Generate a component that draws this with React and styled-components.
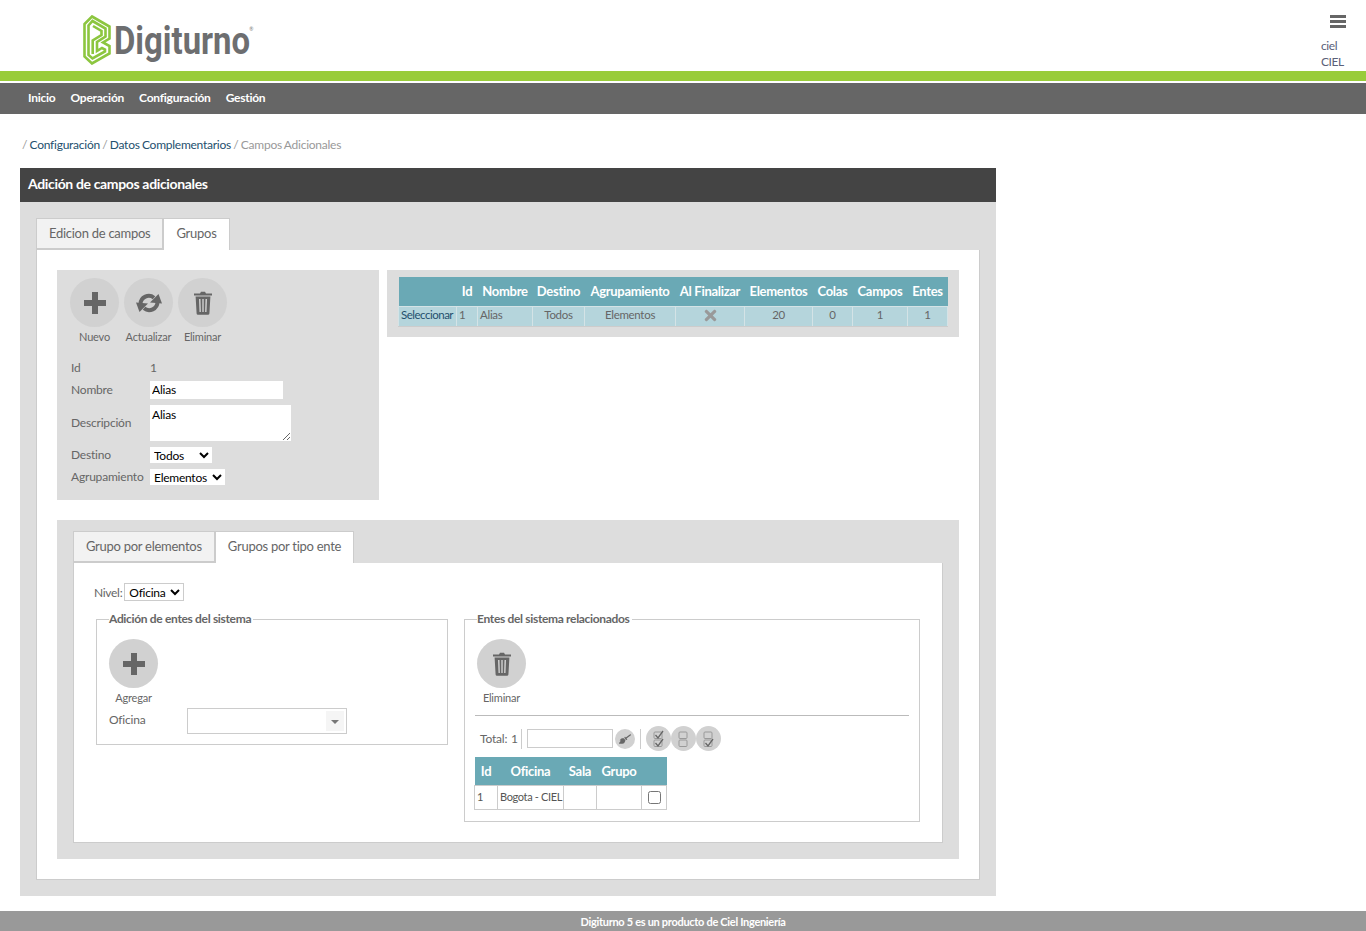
import React from 'react';
import styled, { createGlobalStyle } from 'styled-components';
import { FaTimes, FaBroom } from 'react-icons/fa';

const GlobalStyle = createGlobalStyle`
  html, body {
    margin: 0;
    padding: 0;
    background: #fff;
    font-family: Lato, "Open Sans", sans-serif;
    font-size: 12px;
    color: #666;
  }
  * { box-sizing: border-box; }
`;

const Header = styled.header`
  height: 71px;
  display: flex;
  justify-content: space-between;
  padding-left: 83px;
  padding-right: 19px;
`;

const Logo = styled.div`
  display: flex;
  align-items: flex-start;
  padding-top: 15px;
`;

const LogoText = styled.span`
  display: inline-block;
  font-family: Roboto, sans-serif;
  font-weight: 700;
  font-size: 38px;
  line-height: 52px;
  color: #6d6e70;
  margin: 0 -24px 0 3px;
  transform: scaleX(0.865);
  transform-origin: left center;
`;

const LogoMark = styled.sup`
  font-size: 5px;
  line-height: 1;
  color: #777;
  margin-top: 12px;
  margin-left: 2px;
`;

const UserBox = styled.div`
  width: 26px;
  padding-top: 15px;
  display: flex;
  flex-direction: column;
  color: #5a6078;
  font-size: 12px;
  line-height: 16px;
  letter-spacing: -0.4px;
`;

const Burger = styled.div`
  width: 16px;
  height: 13px;
  margin-left: 9px;
  margin-bottom: 10px;
  background: linear-gradient(#666 0 3px, transparent 3px 5px, #666 5px 8px, transparent 8px 10px, #666 10px 13px);
`;

const GreenBar = styled.div`
  height: 10px;
  background: #99cc3a;
`;

const Nav = styled.nav`
  margin-top: 2px;
  height: 31px;
  background: #666;
  display: flex;
  align-items: center;
  gap: 15px;
  padding: 0 0 2px 28px;
  color: #fff;
  font-size: 12px;
  font-weight: 700;
  letter-spacing: -0.25px;
`;

const Main = styled.main`
  padding: 0 0 15px 20px;
`;

const Breadcrumb = styled.div`
  height: 54px;
  padding: 23px 0 0 2px;
  font-size: 12px;
  line-height: 16px;
  color: #999;
  letter-spacing: -0.25px;
  word-spacing: -0.5px;
  b { font-weight: 400; color: #24506e; }
`;

const Panel = styled.section`
  width: 976px;
`;

const PanelTitle = styled.h1`
  margin: 0;
  height: 34px;
  line-height: 32px;
  padding-left: 8px;
  background: #444;
  color: #fff;
  font-size: 14px;
  font-weight: 700;
  letter-spacing: -0.35px;
`;

const PanelBody = styled.div`
  background: #ddd;
  padding: 16px;
`;

const Tabs = styled.div`
  display: flex;
  height: 32px;
`;

const Tab = styled.div`
  height: 32px;
  padding: 0 12px;
  line-height: 29px;
  font-size: 13px;
  letter-spacing: -0.27px;
  color: #666;
  background: ${p => (p.$active ? '#fff' : '#f2f2f2')};
  border: 1px solid #ccc;
  border-bottom: ${p => (p.$active ? 'none' : '2px solid #ccc')};
`;

const TabContent = styled.div`
  background: #fff;
  border: 1px solid #ccc;
  border-top: none;
  padding: 20px;
  display: flex;
  flex-direction: column;
  gap: 20px;
`;

const TopRow = styled.div`
  display: flex;
  align-items: flex-start;
  gap: 8px;
`;

const FormBox = styled.div`
  width: 322px;
  height: 230px;
  background: #ddd;
  padding: 8px 14px 0 13px;
`;

const Toolbar = styled.div`
  display: flex;
  gap: 5px;
`;

const ActionWrap = styled.div`
  width: 49px;
  display: flex;
  flex-direction: column;
  align-items: center;
`;

const Circle = styled.div`
  width: ${p => p.$size || 49}px;
  height: ${p => p.$size || 49}px;
  flex: none;
  border-radius: 50%;
  background: ${p => p.$bg || '#d1d1d1'};
  color: #666;
  display: flex;
  align-items: center;
  justify-content: center;
`;

const ActionLabel = styled.span`
  margin-top: 3px;
  font-size: 11px;
  line-height: 14px;
  white-space: nowrap;
  color: #666;
  letter-spacing: -0.2px;
`;

const FormGrid = styled.div`
  display: grid;
  grid-template-columns: 79px 1fr;
  margin: 16px 0 0 1px;
  font-size: 12px;
  letter-spacing: -0.2px;
  align-items: center;
  row-gap: 6px;
`;

const FieldLabel = styled.div`
  line-height: 15px;
  margin-top: ${p => (p.$plain ? 0 : -2)}px;
`;

const FieldValue = styled.span`
  line-height: 15px;
`;

const TextField = styled.input`
  display: block;
  width: 133px;
  height: 18px;
  border: none;
  padding: 0 2px 2px;
  font: inherit;
  letter-spacing: -0.2px;
  color: #000;
  background: #fff;
`;

const TextArea = styled.textarea`
  display: block;
  width: 141px;
  height: 36px;
  border: none;
  padding: 2px 2px 0;
  font: inherit;
  letter-spacing: -0.2px;
  line-height: 15px;
  color: #000;
  background: #fff;
`;

const Select = styled.select`
  display: block;
  width: ${p => p.$w}px;
  height: ${p => p.$h || 16}px;
  border: ${p => (p.$bordered ? '1px solid #ccc' : 'none')};
  background: #fff;
  color: #000;
  font: inherit;
  font-size: 12px;
  letter-spacing: -0.25px;
  padding: 0 0 2px;
`;

const GridBox = styled.div`
  width: 572px;
  height: 67px;
  background: #ddd;
  padding: 7px 12px;
`;

const DataTable = styled.table`
  border-collapse: collapse;
  table-layout: fixed;
  width: ${p => p.$w}px;
  margin-left: ${p => p.$shift || 0}px;
  font-size: 11.5px;
  th {
    background: #6aa9b5;
    color: #fff;
    font-weight: 700;
    font-size: 13px;
    letter-spacing: -0.3px;
    padding: 0;
    text-align: center;
    white-space: nowrap;
    overflow: visible;
  }
`;

const MainRow = styled.tr`
  height: 20px;
  background: #b5d5dc;
  color: #666;
  td {
    border: 1px solid #d4e3e6;
    border-bottom: 1px solid #ccc;
    padding: 0 0 3px;
    text-align: center;
    white-space: nowrap;
    overflow: visible;
    letter-spacing: -0.3px;
  }
`;

const HeadRow = styled.tr`
  height: ${p => p.$h}px;
`;

const LeftCell = styled.td`
  && { text-align: left; padding-left: ${p => p.$pad || 2}px; }
`;

const SelectLink = styled(LeftCell)`
  && { color: #24506e; letter-spacing: -0.5px; }
`;

const CrossMark = styled(FaTimes)`
  display: block;
  margin: -1px auto -3px;
  color: #999;
`;

const SubBox = styled.div`
  background: #ddd;
  padding: 11px 16px 16px;
`;

const SubContent = styled.div`
  background: #fff;
  border: 1px solid #ccc;
  border-top: none;
  padding: 20px 22px 20px 20px;
  height: 280px;
`;

const LevelRow = styled.div`
  display: flex;
  align-items: center;
  gap: 2px;
  height: 18px;
  font-size: 12px;
  letter-spacing: -0.3px;
`;

const Columns = styled.div`
  display: flex;
  align-items: flex-start;
  gap: 16px;
  margin: 10px 0 0 2px;
`;

const Group = styled.fieldset`
  margin: 0;
  width: ${p => p.$w}px;
  min-width: 0;
  height: ${p => p.$h}px;
  border: 1px solid #ccc;
  padding: 12px 10px 0 12px;
`;

const GroupTitle = styled.legend`
  padding: 0 2px 0 0;
  font-size: 12px;
  line-height: 16px;
  font-weight: 700;
  color: #666;
  letter-spacing: -0.33px;
`;

const OfficeRow = styled.div`
  display: flex;
  align-items: flex-start;
  margin-top: 3px;
  font-size: 12px;
  line-height: 16px;
  letter-spacing: -0.2px;
`;

const OfficeLabel = styled.span`
  width: 78px;
  padding-top: 4px;
`;

const Combo = styled.div`
  width: 160px;
  height: 26px;
  border: 1px solid #ccc;
  display: flex;
  justify-content: flex-end;
  padding: 2px 2px;
`;

const ComboArrow = styled.div`
  width: 18px;
  background: #f5f5f5;
  display: flex;
  align-items: center;
  justify-content: center;
  &::after {
    content: '';
    border-left: 4px solid transparent;
    border-right: 4px solid transparent;
    border-top: 4px solid #777;
    margin-top: 2px;
  }
`;

const Rule = styled.hr`
  margin: 10px 0 0 -2px;
  width: 434px;
  border: none;
  border-top: 1px solid #bbb;
  height: 0;
`;

const GridTools = styled.div`
  display: flex;
  align-items: center;
  height: 25px;
  margin: 10px 0 6px -2px;
`;

const TotalText = styled.span`
  padding-left: 5px;
  width: 46px;
  font-size: 12px;
  letter-spacing: -0.2px;
  word-spacing: 1px;
`;

const Sep = styled.span`
  width: 1px;
  height: 20px;
  margin-left: ${p => p.$gap || 0}px;
  background: #ccc;
`;

const SearchInput = styled.input`
  width: 86px;
  height: 19px;
  margin: 0 2px 0 5px;
  border: 1px solid #ccc;
  background: #fff;
`;

const CheckTools = styled.div`
  display: flex;
  margin-left: 5px;
`;

const SideRow = styled.tr`
  height: 24px;
  background: #fff;
  color: #555;
  td {
    border: 1px solid #ccc;
    padding: 0 0 2px;
    white-space: nowrap;
    letter-spacing: -0.35px;
    font-size: 11px;
  }
`;

const Check = styled.input`
  display: block;
  width: 13px;
  height: 13px;
  margin: 3px auto 0;
`;

const Footer = styled.footer`
  height: 20px;
  background: #999;
  color: #fff;
  text-align: center;
  font-size: 11px;
  font-weight: 700;
  line-height: 22px;
  letter-spacing: -0.3px;
  overflow: hidden;
`;

function LogoIcon() {
  return (
    <svg width="28" height="50" viewBox="0 0 28 50" fill="none" stroke="#8cc63f" strokeWidth="2.6" strokeLinejoin="miter">
      <path d="M9 1.5 L26.5 11.5 V23.5 L20 27.5 L26.5 31 V38.5 L9 48.5 L1.5 41.5 V9 Z" />
      <path d="M9.5 6 L22.5 13.5 V21.5 L14 27 V36 L19 33 L22 34.5 V36.5 L9.5 43.5 L5.5 40 V10.5 Z" />
      <path d="M10 11 L18.5 16 V20 L9.7 25.5 V39" />
    </svg>
  );
}

function PlusIcon() {
  return (
    <svg width="24" height="24" viewBox="0 0 24 24" fill="#666">
      <path d="M9 1h6v8h8v6h-8v8H9v-8H1V9h8z" />
    </svg>
  );
}

function RefreshIcon() {
  const half = (
    <>
      <path d="M4.5 13a8.3 8.3 0 0 1 13.5-6.3" fill="none" stroke="#666" strokeWidth="4" />
      <path d="M14 11.5 26 12.5 22.5 3z" />
    </>
  );
  return (
    <svg width="26" height="24" viewBox="0 0 26 24" fill="#666">
      {half}
      <g transform="rotate(180 13 12)">{half}</g>
    </svg>
  );
}

function TrashIcon() {
  return (
    <svg width="20" height="24" viewBox="0 0 20 24" fill="#666">
      <path d="M7 2.5 8 .8h4l1 1.7h6v2H1v-2z" />
      <path fillRule="evenodd" d="M2.6 5.5h14.8l-1 17a1.4 1.4 0 0 1-1.4 1.3H5a1.4 1.4 0 0 1-1.4-1.3zM6 8l.5 13h1.4L7.5 8zm3.3 0v13h1.4V8zm3.2 0-.4 13h1.4L14 8z" />
    </svg>
  );
}

function BoxesIcon({ top, bottom }) {
  const tick = y => <path d={`M3.5 ${y + 2}l2.5 3 5-7`} stroke="#666" strokeWidth="1.3" fill="none" />;
  return (
    <svg width="14" height="18" viewBox="0 0 14 18" fill="none" stroke="#999" strokeWidth="1">
      <rect x="2" y="2" width="8" height="6.5" rx="1" />
      <rect x="2" y="10" width="8" height="6.5" rx="1" />
      {top && tick(3)}
      {bottom && tick(11)}
    </svg>
  );
}

function Action({ label, children }) {
  return (
    <ActionWrap>
      <Circle>{children}</Circle>
      <ActionLabel>{label}</ActionLabel>
    </ActionWrap>
  );
}

export default function App() {
  return (
    <>
      <GlobalStyle />
      <Header>
        <Logo>
          <LogoIcon />
          <LogoText>Digiturno</LogoText>
          <LogoMark>®</LogoMark>
        </Logo>
        <UserBox>
          <Burger />
          <span>ciel</span>
          <span>CIEL</span>
        </UserBox>
      </Header>
      <GreenBar />
      <Nav>
        <span>Inicio</span>
        <span>Operación</span>
        <span>Configuración</span>
        <span>Gestión</span>
      </Nav>

      <Main>
        <Breadcrumb>
          / <b>Configuración</b> / <b>Datos Complementarios</b> / Campos Adicionales
        </Breadcrumb>
        <Panel>
          <PanelTitle>Adición de campos adicionales</PanelTitle>
          <PanelBody>
            <Tabs>
              <Tab>Edicion de campos</Tab>
              <Tab $active>Grupos</Tab>
            </Tabs>
            <TabContent>
              <TopRow>
                <FormBox>
                  <Toolbar>
                    <Action label="Nuevo"><PlusIcon /></Action>
                    <Action label="Actualizar"><RefreshIcon /></Action>
                    <Action label="Eliminar"><TrashIcon /></Action>
                  </Toolbar>
                  <FormGrid>
                    <FieldLabel $plain>Id</FieldLabel>
                    <FieldValue>1</FieldValue>
                    <FieldLabel>Nombre</FieldLabel>
                    <TextField defaultValue="Alias" />
                    <FieldLabel>Descripción</FieldLabel>
                    <TextArea defaultValue="Alias" />
                    <FieldLabel>Destino</FieldLabel>
                    <Select $w={62}><option>Todos</option></Select>
                    <FieldLabel>Agrupamiento</FieldLabel>
                    <Select $w={75}><option>Elementos</option></Select>
                  </FormGrid>
                </FormBox>
                <GridBox>
                  <DataTable $w={549} $shift={-1}>
                    <colgroup>
                      {[58, 21, 55, 52, 91, 69, 68, 40, 55, 40].map((w, i) => <col key={i} width={w} />)}
                    </colgroup>
                    <thead>
                      <HeadRow $h={29}>
                        <th />
                        <th>Id</th>
                        <th>Nombre</th>
                        <th>Destino</th>
                        <th>Agrupamiento</th>
                        <th>Al Finalizar</th>
                        <th>Elementos</th>
                        <th>Colas</th>
                        <th>Campos</th>
                        <th>Entes</th>
                      </HeadRow>
                    </thead>
                    <tbody>
                      <MainRow>
                        <SelectLink>Seleccionar</SelectLink>
                        <LeftCell>1</LeftCell>
                        <LeftCell>Alias</LeftCell>
                        <td>Todos</td>
                        <td>Elementos</td>
                        <td><CrossMark size={17} /></td>
                        <td>20</td>
                        <td>0</td>
                        <td>1</td>
                        <td>1</td>
                      </MainRow>
                    </tbody>
                  </DataTable>
                </GridBox>
              </TopRow>

              <SubBox>
                <Tabs>
                  <Tab>Grupo por elementos</Tab>
                  <Tab $active>Grupos por tipo ente</Tab>
                </Tabs>
                <SubContent>
                  <LevelRow>
                    Nivel:
                    <Select $w={60} $h={18} $bordered><option>Oficina</option></Select>
                  </LevelRow>
                  <Columns>
                    <Group $w={352} $h={134}>
                      <GroupTitle>Adición de entes del sistema</GroupTitle>
                      <Action label="Agregar"><PlusIcon /></Action>
                      <OfficeRow>
                        <OfficeLabel>Oficina</OfficeLabel>
                        <Combo><ComboArrow /></Combo>
                      </OfficeRow>
                    </Group>
                    <Group $w={456} $h={211}>
                      <GroupTitle>Entes del sistema relacionados</GroupTitle>
                      <Action label="Eliminar"><TrashIcon /></Action>
                      <Rule />
                      <GridTools>
                        <TotalText>Total: 1</TotalText>
                        <Sep />
                        <SearchInput />
                        <Circle $size={20}><FaBroom size={12} /></Circle>
                        <Sep $gap={5} />
                        <CheckTools>
                          <Circle $size={25}><BoxesIcon top bottom /></Circle>
                          <Circle $size={25}><BoxesIcon /></Circle>
                          <Circle $size={25}><BoxesIcon bottom /></Circle>
                        </CheckTools>
                      </GridTools>
                      <DataTable $w={192} $shift={-3}>
                        <colgroup>
                          {[23, 66, 33, 45, 25].map((w, i) => <col key={i} width={w} />)}
                        </colgroup>
                        <thead>
                          <HeadRow $h={28}>
                            <th>Id</th>
                            <th>Oficina</th>
                            <th>Sala</th>
                            <th>Grupo</th>
                            <th />
                          </HeadRow>
                        </thead>
                        <tbody>
                          <SideRow>
                            <LeftCell>1</LeftCell>
                            <LeftCell>Bogota - CIEL</LeftCell>
                            <td />
                            <td />
                            <td><Check type="checkbox" /></td>
                          </SideRow>
                        </tbody>
                      </DataTable>
                    </Group>
                  </Columns>
                </SubContent>
              </SubBox>
            </TabContent>
          </PanelBody>
        </Panel>
      </Main>
      <Footer>Digiturno 5 es un producto de Ciel Ingeniería</Footer>
    </>
  );
}
